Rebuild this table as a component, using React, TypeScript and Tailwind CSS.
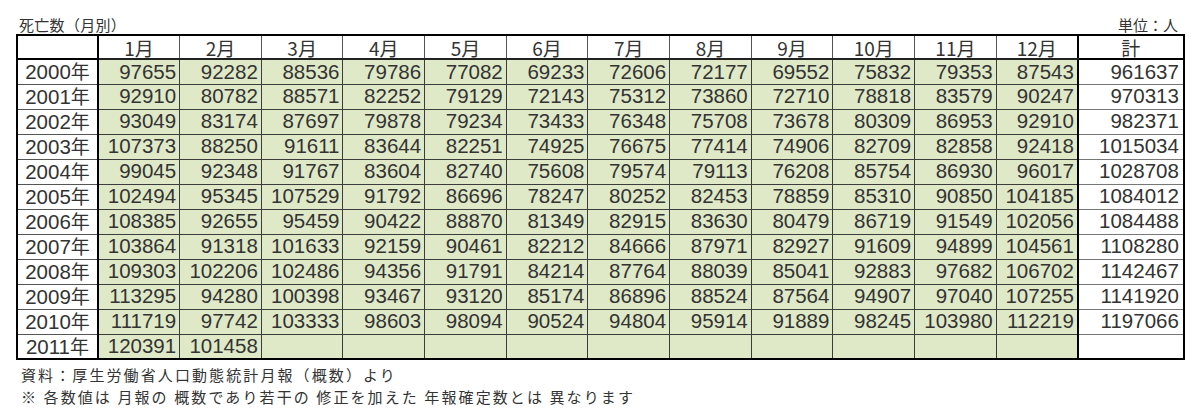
import React from "react";

const months = ["1月", "2月", "3月", "4月", "5月", "6月", "7月", "8月", "9月", "10月", "11月", "12月"];

const rows: { year: string; values: number[]; total?: number }[] = [
  { year: "2000年", values: [97655, 92282, 88536, 79786, 77082, 69233, 72606, 72177, 69552, 75832, 79353, 87543], total: 961637 },
  { year: "2001年", values: [92910, 80782, 88571, 82252, 79129, 72143, 75312, 73860, 72710, 78818, 83579, 90247], total: 970313 },
  { year: "2002年", values: [93049, 83174, 87697, 79878, 79234, 73433, 76348, 75708, 73678, 80309, 86953, 92910], total: 982371 },
  { year: "2003年", values: [107373, 88250, 91611, 83644, 82251, 74925, 76675, 77414, 74906, 82709, 82858, 92418], total: 1015034 },
  { year: "2004年", values: [99045, 92348, 91767, 83604, 82740, 75608, 79574, 79113, 76208, 85754, 86930, 96017], total: 1028708 },
  { year: "2005年", values: [102494, 95345, 107529, 91792, 86696, 78247, 80252, 82453, 78859, 85310, 90850, 104185], total: 1084012 },
  { year: "2006年", values: [108385, 92655, 95459, 90422, 88870, 81349, 82915, 83630, 80479, 86719, 91549, 102056], total: 1084488 },
  { year: "2007年", values: [103864, 91318, 101633, 92159, 90461, 82212, 84666, 87971, 82927, 91609, 94899, 104561], total: 1108280 },
  { year: "2008年", values: [109303, 102206, 102486, 94356, 91791, 84214, 87764, 88039, 85041, 92883, 97682, 106702], total: 1142467 },
  { year: "2009年", values: [113295, 94280, 100398, 93467, 93120, 85174, 86896, 88524, 87564, 94907, 97040, 107255], total: 1141920 },
  { year: "2010年", values: [111719, 97742, 103333, 98603, 98094, 90524, 94804, 95914, 91889, 98245, 103980, 112219], total: 1197066 },
  { year: "2011年", values: [120391, 101458] },
];

const jp = { fontFamily: '"Noto Sans CJK JP", sans-serif' };
const num = { fontFamily: '"Liberation Sans", "Noto Sans CJK JP", sans-serif' };

export default function App() {
  return (
    <div className="w-[1200px] h-[414px] bg-white text-[#333] overflow-hidden">
      <div className="ml-[16px] w-[1167px] pt-[15px]">
        <div className="flex justify-between items-end h-[19px] text-[15px] leading-[19px] pl-[3px] pr-[5px]" style={jp}>
          <span className="tracking-[0.3px]">死亡数（月別）</span>
          <span>単位：人</span>
        </div>
        <table className="w-[1167px] table-fixed border-collapse border-2 border-black" style={num}>
          <colgroup>
            <col className="w-[81px]" />
            {months.map((m) => (
              <col key={m} className="w-[81.67px]" />
            ))}
            <col className="w-[106px]" />
          </colgroup>
          <thead>
            <tr className="h-[24px] text-[19px] leading-none">
              <th className="border-r-2 border-b-2 border-black bg-white"></th>
              {months.map((m) => (
                <th key={m} className="font-normal border-b-2 border-r border-b-[#222] border-r-[#555] bg-white text-center" style={jp}>
                  {m}
                </th>
              ))}
              <th className="font-normal border-b-2 border-l-2 border-black bg-white text-center" style={jp}>
                計
              </th>
            </tr>
          </thead>
          <tbody>
            {rows.map((r) => (
              <tr key={r.year} className="h-[25px] text-[20.5px] leading-none">
                <td className="border-r-2 border-b border-r-black border-b-[#555] bg-white text-center">
                  {r.year.slice(0, 4)}
                  <span style={jp} className="text-[19px]">年</span>
                </td>
                {months.map((m, i) => (
                  <td key={m} className="border-r border-b border-[#3c3c3c] bg-[#dfe9c8] text-right pr-[3px]">
                    {r.values[i] ?? ""}
                  </td>
                ))}
                <td className="border-l-2 border-b border-l-black border-b-[#777] bg-white text-right pr-[4px]">
                  {r.total ?? ""}
                </td>
              </tr>
            ))}
          </tbody>
        </table>
        <div className="pt-[4px] pl-[5px] text-[15px] leading-[22px] tracking-[2.1px] whitespace-pre" style={jp}>
          <div>資料：厚生労働省人口動態統計月報（概数）より</div>
          <div>※ 各数値は 月報の 概数であり若干の 修正を加えた 年報確定数とは 異なります</div>
        </div>
      </div>
    </div>
  );
}
